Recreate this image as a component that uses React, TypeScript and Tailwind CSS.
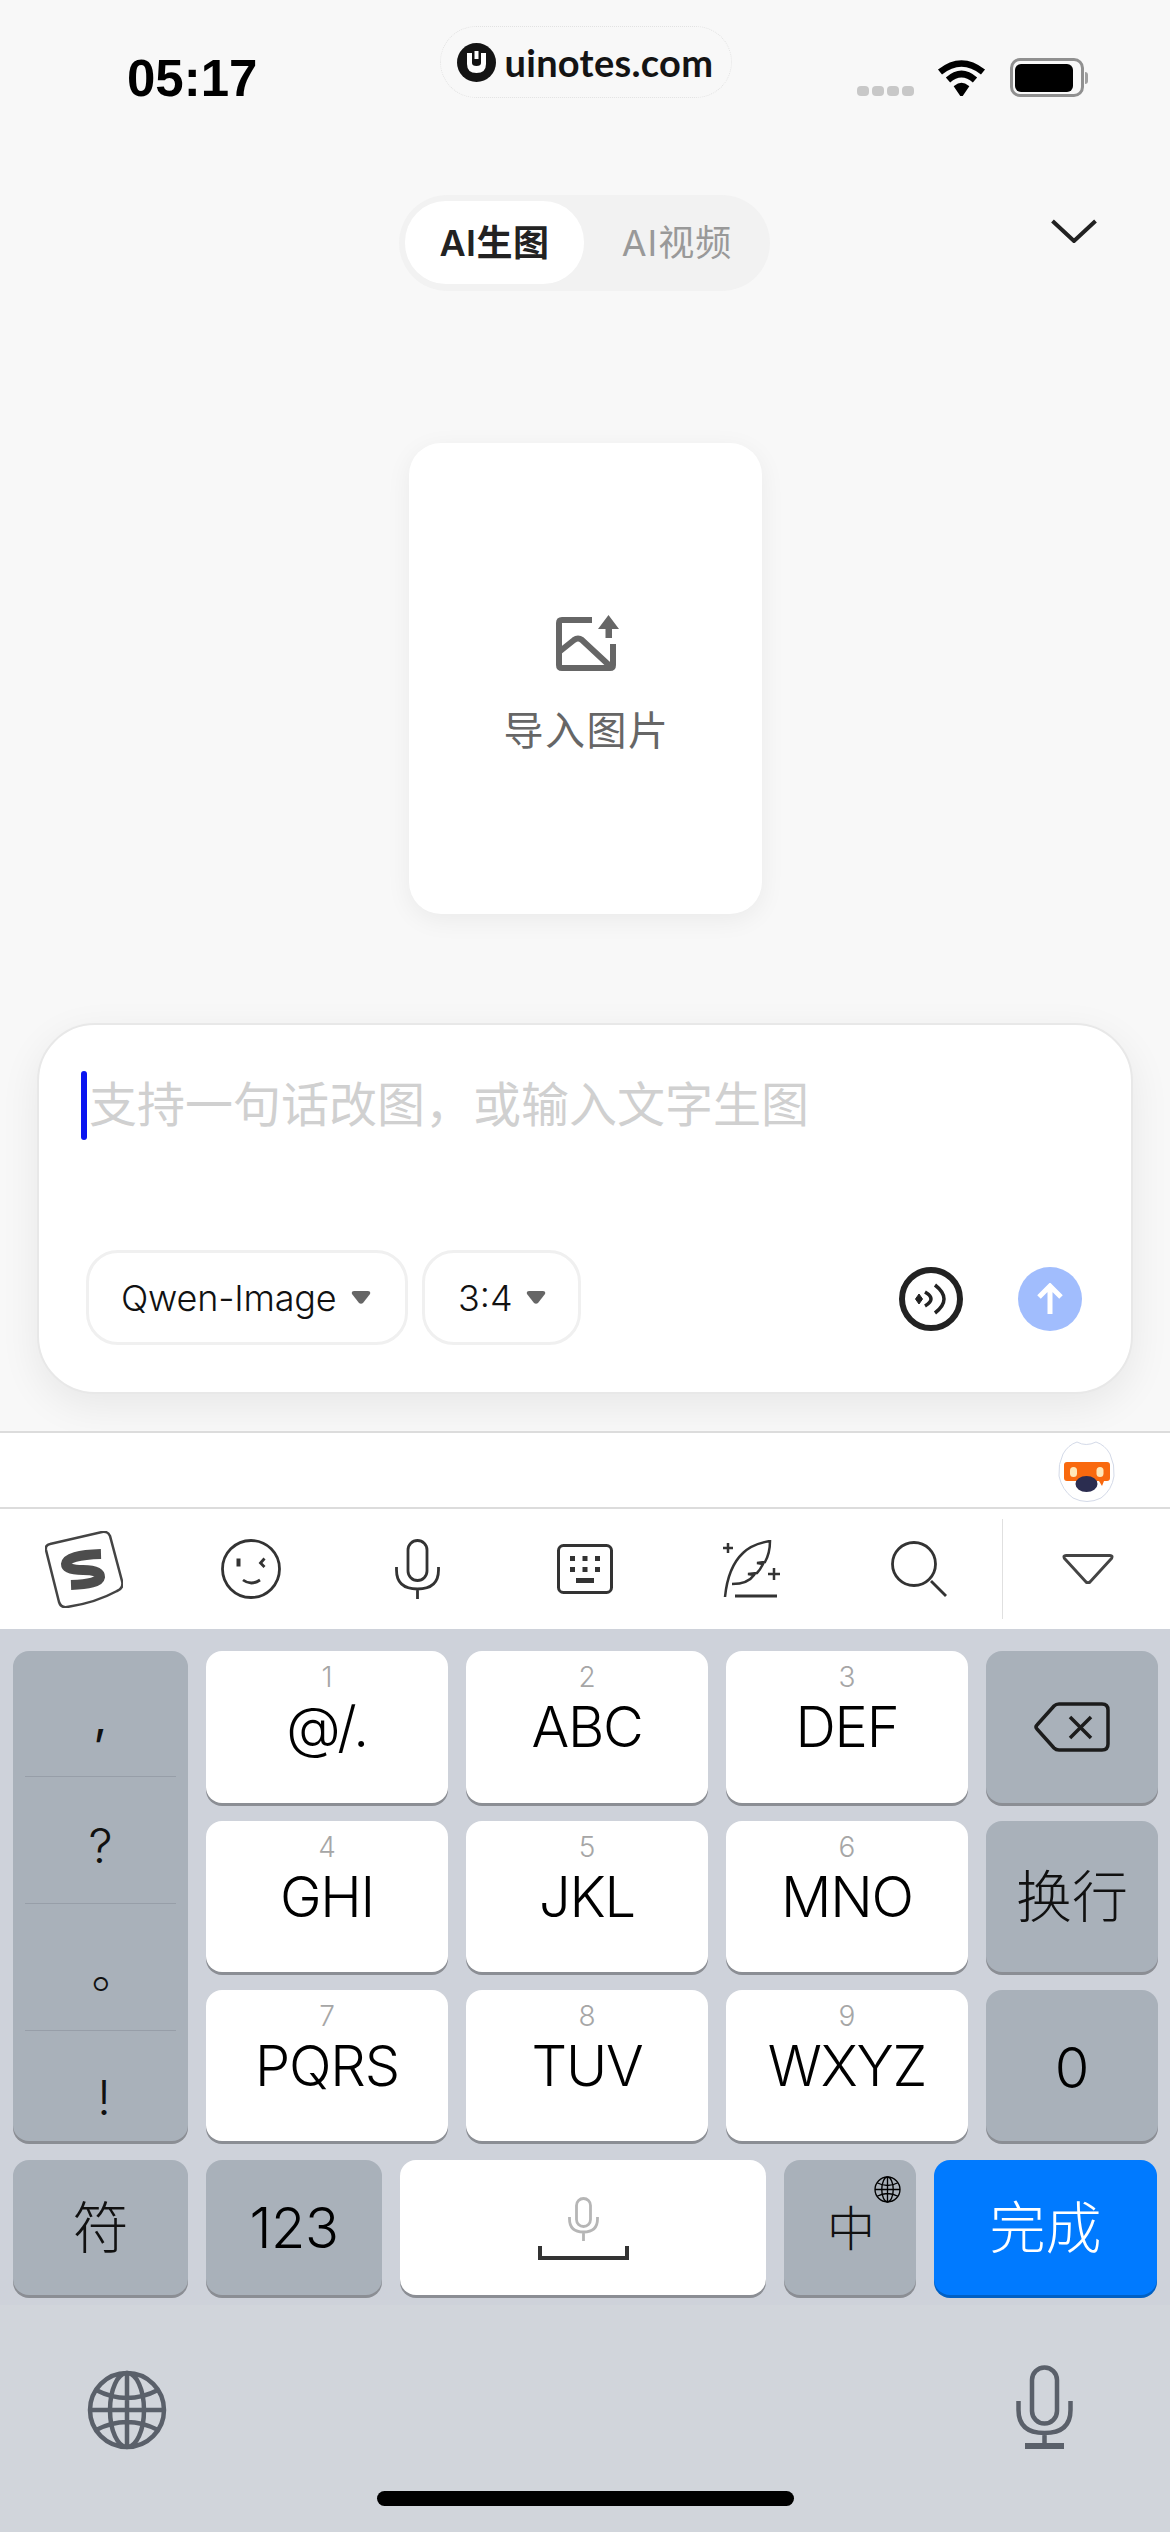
const CJK = "font-['Inter','Noto_Sans_CJK_SC',sans-serif]";

const numberKeys = [
  { digit: "1", label: "@/." },
  { digit: "2", label: "ABC" },
  { digit: "3", label: "DEF" },
  { digit: "4", label: "GHI" },
  { digit: "5", label: "JKL" },
  { digit: "6", label: "MNO" },
  { digit: "7", label: "PQRS" },
  { digit: "8", label: "TUV" },
  { digit: "9", label: "WXYZ" },
];

const punctuation = [
  { char: ",", cell: "h-[126px] pt-[42px]", glyph: "font-normal" },
  { char: "?", cell: "h-[127px] pt-[45px]", glyph: "font-light" },
  { char: "。", cell: "h-[127px] pt-[43px]", glyph: "ml-[30px] font-light" },
  { char: "!", cell: "flex-1 pt-[43px]", glyph: "ml-[7px] font-light" },
];

const GlobeIcon = ({ size, stroke }: { size: number; stroke: number }) => (
  <svg width={size} height={size} viewBox="0 0 80 80" fill="none" stroke="currentColor" strokeWidth={stroke}>
    <circle cx="40" cy="40" r="37" />
    <ellipse cx="40" cy="40" rx="17" ry="37" />
    <path d="M40 3v74M3 40h74M9 20q31 16 62 0M9 60q31-16 62 0" />
  </svg>
);

const StatusBar = () => (
  <div className="flex h-[110px] items-start">
    <span className="ml-[127px] mt-[53px] font-['Liberation_Sans',sans-serif] text-[51px] leading-[52px] font-bold text-black">
      05:17
    </span>
    <div className="ml-[183px] mt-[26px] flex h-[72px] w-[292px] items-center rounded-[36px] border border-dotted border-[#e2e2e2] pl-[16px]">
      <svg width="39" height="39" viewBox="0 0 39 39">
        <circle cx="19.5" cy="19.5" r="19.5" fill="#141414" />
        <path d="M10 10h5v10q0 3 4.500 3t4.500-3V10h5v11q0 9-9.500 9T10 21z" fill="#fff" />
        <path d="M17.500 8h4v8h-4z" fill="#fff" />
      </svg>
      <span className="ml-[8px] font-['Lato',sans-serif] text-[38px] leading-[40px] font-bold tracking-[0.3px] text-[#141414]">
        uinotes.com
      </span>
    </div>
    <div className="ml-[125px] mt-[86px] flex gap-[3px]">
      <span className="h-[10px] w-[12px] rounded-[4px] bg-[#c8c8c8]" />
      <span className="h-[10px] w-[12px] rounded-[4px] bg-[#c8c8c8]" />
      <span className="h-[10px] w-[12px] rounded-[4px] bg-[#c8c8c8]" />
      <span className="h-[10px] w-[12px] rounded-[4px] bg-[#c8c8c8]" />
    </div>
    <svg className="ml-[23px] mt-[59px]" width="49" height="37" viewBox="0 0 49 37" fill="none" stroke="#000" strokeWidth="6.500">
      <path d="M3 13Q24.500-4 46 13" />
      <path d="M11 21Q24.500 9 38 21" />
      <path d="M18 27.500Q24.500 22 31 27.500L24.500 37Z" fill="#000" strokeWidth="2" />
    </svg>
    <div className="ml-[24px] mt-[58px] flex items-center">
      <div className="flex h-[39px] w-[74px] items-center rounded-[10px] border-[3px] border-[#909090] p-[2px]">
        <div className="h-[28px] w-[58px] rounded-[6px] bg-black" />
      </div>
      <div className="ml-[1px] h-[12px] w-[3px] rounded-r-[3px] bg-[#a0a0a0]" />
    </div>
  </div>
);

const ModeTabs = () => (
  <div className="mt-[85px] flex items-start">
    <div className={`ml-[399px] flex h-[96px] w-[371px] rounded-[48px] bg-[#f2f2f2] pl-[6px] pt-[6px] ${CJK}`}>
      <div className="flex h-[83px] w-[179px] items-center justify-center rounded-[41px] bg-white text-[36px] font-semibold tracking-[0.5px] text-[#222]">
        AI生图
      </div>
      <div className="flex h-[83px] flex-1 items-center justify-center text-[36px] tracking-[1px] text-[#999]">AI视频</div>
    </div>
    <svg className="ml-[281px] mt-[24px]" width="46" height="24" viewBox="0 0 46 24" fill="none" stroke="#222" strokeWidth="4">
      <path d="M1.500 2 23 22 44.500 2" />
    </svg>
  </div>
);

const ImportCard = () => (
  <div className="ml-[409px] mt-[152px] flex h-[471px] w-[353px] flex-col items-center rounded-[32px] bg-white pt-[172px] shadow-[0_6px_26px_rgba(0,0,0,0.06)]">
    <svg className="ml-[4px]" width="63" height="56" viewBox="0 0 63 56" fill="none">
      <path d="M36 5H6Q3 5 3 8v42q0 3 3 3h48q3 0 3-3V29" stroke="#666" strokeWidth="6" />
      <path d="M3 37 18 25q4-3 8 0l29 27" stroke="#666" strokeWidth="6" />
      <path d="M52.500 0 63 14H56v9h-6.500v-9H42Z" fill="#666" />
    </svg>
    <span className={`ml-[2px] mt-[36px] text-[40px] leading-[48px] tracking-[1.500px] text-[#666] ${CJK}`}>导入图片</span>
  </div>
);

const Caret = () => (
  <svg width="20" height="13" viewBox="0 0 20 13">
    <path d="M3 0h14q3 0 2 3l-7 9q-2 1.500-4 0L1 3Q0 0 3 0Z" fill="#666" />
  </svg>
);

const PromptCard = () => (
  <div className="ml-[37px] mt-[109px] flex h-[371px] w-[1096px] flex-col rounded-[58px] border-2 border-[#e8e8e8] bg-white shadow-[0_12px_40px_rgba(0,0,0,0.07)]">
    <div className="ml-[42px] mt-[46px] flex h-[69px] items-start">
      <div className="h-[69px] w-[6px] rounded-[3px] bg-[#0a14f0]" />
      <span className={`ml-[2px] mt-[6px] text-[48px] leading-[56px] text-[#d0d0d0] ${CJK}`}>
        支持一句话改图，或输入文字生图
      </span>
    </div>
    <div className="mt-[110px] flex items-start pl-[47px]">
      <div className="flex h-[95px] w-[322px] items-center rounded-[32px] border-[3px] border-[#f0f0f0] pl-[32px]">
        <span className="font-['Inter',sans-serif] text-[36px] font-light tracking-[-0.2px] text-[#111]">Qwen-Image</span>
        <span className="ml-[14px]">
          <Caret />
        </span>
      </div>
      <div className="ml-[14px] flex h-[95px] w-[159px] items-center rounded-[32px] border-[3px] border-[#f0f0f0] pl-[33px]">
        <span className="font-['Inter',sans-serif] text-[36px] font-light text-[#111]">3:4</span>
        <span className="ml-[13px]">
          <Caret />
        </span>
      </div>
      <div className="ml-[318px] mt-[17px] flex h-[64px] w-[64px] items-center justify-center rounded-full border-[6px] border-[#222]">
        <svg width="34" height="34" viewBox="0 0 34 34" fill="none" stroke="#222" strokeWidth="3.500">
          <path d="M5 12 1.500 17 5 22 8.500 17Z" fill="#222" strokeWidth="1" />
          <path d="M11 10q12 7 0 14M21 3q18 14 0 28" />
        </svg>
      </div>
      <div className="ml-[55px] mt-[17px] flex h-[64px] w-[64px] items-center justify-center rounded-full bg-[#a1bdfd]">
        <svg width="30" height="32" viewBox="0 0 30 32" fill="none" stroke="#fff" strokeWidth="5">
          <path d="M15 31V4M4 14 15 3l11 11" />
        </svg>
      </div>
    </div>
  </div>
);

const Mascot = () => (
  <svg width="57" height="63" viewBox="0 0 57 63">
    <path
      d="M19 2q9 5 19 0 9 3 14 12 5 11 4 22-2 14-13 22-14 7-28 0Q4 50 1 36 0 24 5 14q5-9 14-12Z"
      fill="#fff"
      stroke="#d4dae8"
      strokeWidth="1"
    />
    <path d="M6 25q0-3 3-3h40q3 0 3 3v13q0 3-3 3h-3l-2 5-3-5H9q-3 0-3-3Z" fill="#f9690e" />
    <rect x="12" y="27" width="7" height="10" rx="3.500" fill="#ffe7b8" />
    <rect x="38.500" y="27" width="7" height="10" rx="3.500" fill="#ffe7b8" />
    <ellipse cx="28.500" cy="44" rx="11" ry="8" fill="#2b2d50" />
  </svg>
);

const CandidateBar = () => (
  <div className="flex h-[78px] items-center justify-end border-y-2 border-[#dcdcdc] bg-white pr-[55px] pt-[3px]">
    <Mascot />
  </div>
);

const ToolBar = () => (
  <div className="flex h-[120px] items-center bg-white text-[#333]">
    <svg className="ml-[45px]" width="78" height="77" viewBox="0 0 78 77" fill="none">
      <path d="M5 13 57 1q6-1 8 4l12 45q2 7-5 10-22 12-50 16-6 1-8-5L1 19q-1-5 4-6Z" stroke="#444" strokeWidth="2.500" />
      <path d="M56 23Q22 24 21 33q0 6 17 6t17 7q-1 7-29 8" stroke="#4d4d4d" strokeWidth="10" />
    </svg>
    <svg className="ml-[98px]" width="60" height="60" viewBox="0 0 60 60" fill="none" stroke="#333" strokeWidth="2.800">
      <circle cx="30" cy="30" r="28.500" />
      <path d="M17.500 19.500v8" strokeWidth="4" />
      <path d="M43.500 19.500 39.500 24l4 4" strokeWidth="2.800" />
      <path d="M22 41q8 6 17 0" />
    </svg>
    <svg className="ml-[114px]" width="45" height="60" viewBox="0 0 45 60" fill="none" stroke="#333" strokeWidth="2.800">
      <rect x="13" y="1.500" width="19" height="40" rx="9.500" />
      <path d="M1.500 28v3q0 19 21 19t21-19v-3M22.500 50v10" />
    </svg>
    <svg className="ml-[117px]" width="56" height="50" viewBox="0 0 56 50" fill="none">
      <rect x="1.500" y="1.500" width="53" height="47" rx="5" stroke="#333" strokeWidth="3" />
      <path d="M13 12h5v5h-5zM25.500 12h5v5h-5zM38 12h5v5h-5zM13 23h5v5h-5zM25.500 23h5v5h-5zM38 23h5v5h-5zM19 34h18v5H19z" fill="#333" />
    </svg>
    <svg className="ml-[110px]" width="58" height="58" viewBox="0 0 58 58" fill="none" stroke="#333" strokeWidth="2.500">
      <path d="M2 57q3-30 18-44 9-9 27-12 0 12-5 21l-8 1 6 1q-3 6-6 9l-9 1 6 1q-6 9-22 9" />
      <path d="M12 56h42" strokeWidth="3" />
      <path d="M5 3v10M0 8h10M51 28v12M45 34h12" />
    </svg>
    <svg className="ml-[110px]" width="56" height="56" viewBox="0 0 56 56" fill="none" stroke="#333" strokeWidth="2.800">
      <circle cx="23" cy="23" r="21.500" />
      <path d="M40 40 55 55" />
    </svg>
    <div className="ml-[55px] h-[100px] w-[1px] bg-[#e0e0e0]" />
    <svg className="ml-[59px]" width="52" height="30" viewBox="0 0 52 30" fill="none" stroke="#444" strokeWidth="3">
      <path d="M4 1.500h44q3 0 1.500 3L28 28q-2 1.500-4 0L2.500 4.500Q1 1.500 4 1.500Z" />
    </svg>
  </div>
);

const NumberKey = ({ digit, label }: { digit: string; label: string }) => (
  <div className="flex flex-col items-center rounded-[16px] bg-white pt-[11px] font-['Inter',sans-serif] shadow-[0_3px_0_#8b8e94]">
    <span className="text-[28px] leading-[30px] font-light text-[#a6a6a6]">{digit}</span>
    <span className="mt-[5px] text-[56px] leading-[60px] font-light tracking-[-1.200px] text-black">{label}</span>
  </div>
);

const KeyGrid = () => (
  <div className="grid grid-cols-[175px_242px_242px_242px_172px] grid-rows-[152px_151px_151px] gap-x-[18px] gap-y-[18px] px-[13px] pt-[22px]">
    <div className="row-span-3 flex flex-col rounded-[16px] bg-[#a9b1ba] px-[12px] shadow-[0_3px_0_#8b8e94]">
      {punctuation.map((item, i) => (
        <div key={item.char} className={`flex justify-center ${item.cell} ${i < 3 ? "border-b border-[#979ea8]" : ""}`}>
          <span className={`text-[48px] leading-[48px] text-[#111] ${CJK} ${item.glyph}`}>{item.char}</span>
        </div>
      ))}
    </div>
    {numberKeys.slice(0, 3).map((k) => (
      <NumberKey key={k.digit} {...k} />
    ))}
    <div className="flex items-center justify-center rounded-[16px] bg-[#a9b1ba] shadow-[0_3px_0_#8b8e94]">
      <svg width="76" height="50" viewBox="0 0 76 50" fill="none" stroke="#1c1c1c" strokeWidth="3.500">
        <path d="M25 2h43q6 0 6 6v34q0 6-6 6H25q-3 0-5-2L3 27q-2-2 0-4L20 4q2-2 5-2Z" />
        <path d="M36 15 57 36M57 15 36 36" />
      </svg>
    </div>
    {numberKeys.slice(3, 6).map((k) => (
      <NumberKey key={k.digit} {...k} />
    ))}
    <div className={`flex items-center justify-center rounded-[16px] bg-[#a9b1ba] text-[56px] font-light text-[#111] shadow-[0_3px_0_#8b8e94] ${CJK}`}>
      换行
    </div>
    {numberKeys.slice(6, 9).map((k) => (
      <NumberKey key={k.digit} {...k} />
    ))}
    <div className="flex items-center justify-center rounded-[16px] bg-[#a9b1ba] pt-[4px] font-['Inter',sans-serif] text-[56px] font-light text-black shadow-[0_3px_0_#8b8e94]">
      0
    </div>
  </div>
);

const BottomRow = () => (
  <div className={`mt-[19px] flex h-[135px] gap-x-[18px] px-[13px] ${CJK}`}>
    <div className="flex w-[175px] items-center justify-center rounded-[16px] bg-[#a9b1ba] text-[56px] font-light text-[#111] shadow-[0_3px_0_#8b8e94]">
      符
    </div>
    <div className="flex w-[176px] items-center justify-center rounded-[16px] bg-[#a9b1ba] text-[56px] font-light tracking-[-0.500px] text-black shadow-[0_3px_0_#8b8e94]">
      123
    </div>
    <div className="flex w-[366px] flex-col items-center rounded-[16px] bg-white pt-[37px] shadow-[0_3px_0_#8b8e94]">
      <svg width="31" height="44" viewBox="0 0 31 44" fill="none" stroke="#b6b6b6" strokeWidth="2.800">
        <rect x="8.500" y="1.500" width="14" height="28" rx="7" />
        <path d="M1.500 20v2q0 13 14 13t14-13v-2M15.500 35v9" />
      </svg>
      <svg className="mt-[5px]" width="91" height="14" viewBox="0 0 91 14" fill="none" stroke="#333" strokeWidth="4">
        <path d="M2 0v12h87V0" />
      </svg>
    </div>
    <div className="flex w-[132px] flex-col rounded-[16px] bg-[#a9b1ba] pl-[43px] pt-[16px] shadow-[0_3px_0_#8b8e94] text-[#111]">
      <span className="ml-[47px] text-black">
        <GlobeIcon size={27} stroke={4} />
      </span>
      <span className="mt-[-1px] text-[48px] leading-[54px] font-light">中</span>
    </div>
    <div className="flex flex-1 items-center justify-center rounded-[16px] bg-[#007aff] text-[56px] font-light text-white shadow-[0_3px_0_#0060c4]">
      完成
    </div>
  </div>
);

const Keyboard = () => (
  <div className="flex flex-1 flex-col bg-[#ced2da]">
    <KeyGrid />
    <BottomRow />
    <div className="mt-[10px] flex flex-1 flex-col bg-[#d1d5db]">
      <div className="flex items-start text-[#5a606a]">
        <span className="ml-[87px] mt-[65px]">
          <GlobeIcon size={80} stroke={4.500} />
        </span>
        <svg className="ml-[849px] mt-[60px]" width="57" height="84" viewBox="0 0 57 84" fill="none" stroke="#5a606a" strokeWidth="4.500">
          <rect x="16" y="2.500" width="25" height="56" rx="12.500" />
          <path d="M2.500 36v9q0 23 26 23t26-23v-9M28.500 68v12" />
          <path d="M9 81h39" strokeWidth="6" />
        </svg>
      </div>
      <div className="ml-[377px] mt-[41px] h-[15px] w-[417px] rounded-full bg-black" />
    </div>
  </div>
);

export default function App() {
  return (
    <div className="flex h-[2532px] w-[1170px] flex-col overflow-hidden bg-[#f8f8f8]">
      <div className="h-[1431px] shrink-0">
        <StatusBar />
        <ModeTabs />
        <ImportCard />
        <PromptCard />
      </div>
      <CandidateBar />
      <ToolBar />
      <Keyboard />
    </div>
  );
}
